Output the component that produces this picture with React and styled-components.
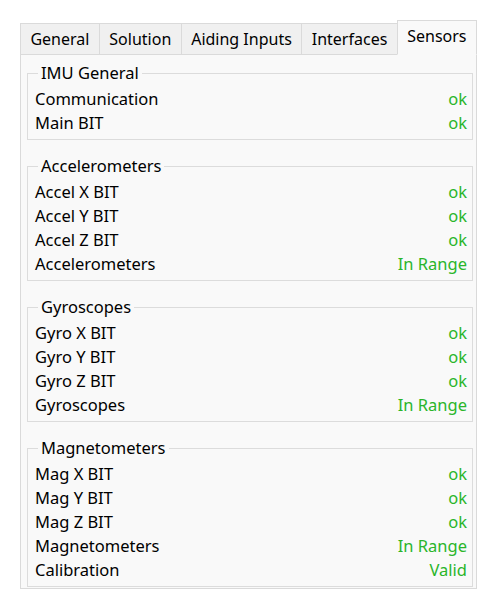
import styled, { createGlobalStyle } from 'styled-components';

const GlobalStyle = createGlobalStyle`
  body {
    margin: 0;
    background: #ffffff;
    font-family: 'Noto Sans', 'Open Sans', sans-serif;
    font-size: 16.5px;
    color: #000;
  }
`;

const tabs = ['General', 'Solution', 'Aiding Inputs', 'Interfaces', 'Sensors'];

const groups = [
  {
    title: 'IMU General',
    rows: [
      ['Communication', 'ok'],
      ['Main BIT', 'ok'],
    ],
  },
  {
    title: 'Accelerometers',
    rows: [
      ['Accel X BIT', 'ok'],
      ['Accel Y BIT', 'ok'],
      ['Accel Z BIT', 'ok'],
      ['Accelerometers', 'In Range'],
    ],
  },
  {
    title: 'Gyroscopes',
    rows: [
      ['Gyro X BIT', 'ok'],
      ['Gyro Y BIT', 'ok'],
      ['Gyro Z BIT', 'ok'],
      ['Gyroscopes', 'In Range'],
    ],
  },
  {
    title: 'Magnetometers',
    rows: [
      ['Mag X BIT', 'ok'],
      ['Mag Y BIT', 'ok'],
      ['Mag Z BIT', 'ok'],
      ['Magnetometers', 'In Range'],
      ['Calibration', 'Valid'],
    ],
  },
];

function App() {
  const active = 'Sensors';

  return (
    <>
      <GlobalStyle />
      <Window>
        <TabBar>
          {tabs.map((tab) => (
            <Tab key={tab} $active={tab === active}>
              {tab}
            </Tab>
          ))}
        </TabBar>
        <Page>
          {groups.map((group) => (
            <GroupBox key={group.title}>
              <Legend>{group.title}</Legend>
              {group.rows.map(([label, value]) => (
                <Row key={label}>
                  <span>{label}</span>
                  <Status>{value}</Status>
                </Row>
              ))}
            </GroupBox>
          ))}
        </Page>
      </Window>
    </>
  );
}

const Window = styled.div`
  width: 457px;
  margin: 19px 0 0 20px;
`;

const TabBar = styled.div`
  display: flex;
  align-items: flex-end;
  height: 35px;
`;

const Tab = styled.div`
  flex: 1 1 auto;
  display: flex;
  align-items: center;
  justify-content: center;
  padding: 0 6px;
  white-space: nowrap;
  box-sizing: border-box;
  font-size: 16px;
  height: ${(p) => (p.$active ? '35px' : '32px')};
  padding-bottom: ${(p) => (p.$active ? '4px' : '0')};
  background: ${(p) => (p.$active ? '#f9f9f9' : '#f0f0f0')};
  border: 1px solid #dadada;
  border-bottom: ${(p) => (p.$active ? '1px solid #f9f9f9' : '1px solid #dadada')};
  margin-left: -1px;
  margin-bottom: -1px;
  position: relative;
  z-index: ${(p) => (p.$active ? 1 : 0)};

  &:first-child {
    margin-left: 0;
  }
`;

const Page = styled.div`
  background: #f9f9f9;
  border: 1px solid #dadada;
  padding: 9px 3px 1px 6px;
  display: flex;
  flex-direction: column;
  gap: 17px;
`;

const GroupBox = styled.fieldset`
  margin: 0;
  border: 1px solid #dcdcdc;
  padding: 4px 5px 5px 7px;
  min-width: 0;
`;

const Legend = styled.legend`
  margin-left: 3px;
  padding: 0 3px;
  line-height: 18px;
`;

const Row = styled.div`
  display: flex;
  justify-content: space-between;
  align-items: center;
  height: 24px;
`;

const Status = styled.span`
  color: #2ab52a;
`;

export default App;
